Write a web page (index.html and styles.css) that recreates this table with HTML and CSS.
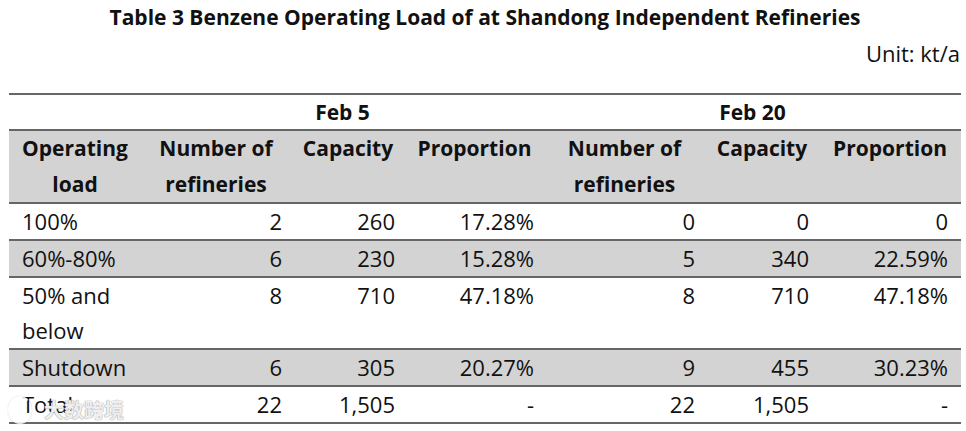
FILE: index.html
```html
<!DOCTYPE html>
<html>
<head>
<meta charset="utf-8">
<link rel="stylesheet" href="styles.css">
</head>
<body>
<div class="page">
  <h1 class="title">Table 3 Benzene Operating Load of at Shandong Independent Refineries</h1>
  <div class="unit">Unit: kt/a</div>
  <table class="load">
    <colgroup>
      <col class="c1"><col class="c2"><col class="c3"><col class="c4"><col class="c5"><col class="c6"><col class="c7">
    </colgroup>
    <tr class="dates">
      <th></th>
      <th colspan="3">Feb 5</th>
      <th colspan="3">Feb 20</th>
    </tr>
    <tr class="head grey">
      <th>Operating<br>load</th>
      <th>Number of<br>refineries</th>
      <th>Capacity</th>
      <th>Proportion</th>
      <th>Number of<br>refineries</th>
      <th>Capacity</th>
      <th>Proportion</th>
    </tr>
    <tr>
      <td>100%</td><td>2</td><td>260</td><td>17.28%</td><td>0</td><td>0</td><td>0</td>
    </tr>
    <tr class="grey">
      <td>60%-80%</td><td>6</td><td>230</td><td>15.28%</td><td>5</td><td>340</td><td>22.59%</td>
    </tr>
    <tr class="tall">
      <td>50% and<br>below</td><td>8</td><td>710</td><td>47.18%</td><td>8</td><td>710</td><td>47.18%</td>
    </tr>
    <tr class="grey">
      <td>Shutdown</td><td>6</td><td>305</td><td>20.27%</td><td>9</td><td>455</td><td>30.23%</td>
    </tr>
    <tr>
      <td>Total</td><td>22</td><td>1,505</td><td>-</td><td>22</td><td>1,505</td><td>-</td>
    </tr>
  </table>
  <div class="watermark"><span class="wm-logo"></span><span class="wm-text">大数跨境</span></div>
</div>
</body>
</html>
```
FILE: styles.css
```css
html, body {
  margin: 0;
  padding: 0;
  background: #ffffff;
}
body {
  font-family: "Open Sans", "Noto Sans CJK SC", sans-serif;
  color: #111111;
  width: 966px;
  height: 431px;
  overflow: hidden;
}
.page {
  position: relative;
  width: 966px;
  height: 431px;
}
.title {
  margin: 0;
  padding-top: 3px;
  font-size: 21px;
  font-weight: 700;
  line-height: 28px;
  text-align: center;
  padding-left: 4px;
}
.unit {
  font-size: 22px;
  line-height: 28px;
  text-align: right;
  padding-right: 6px;
  margin-top: 8px;
}
.load {
  margin-top: 26px;
  margin-left: 9px;
  border-collapse: collapse;
  table-layout: fixed;
  width: 952px;
  font-size: 22px;
}
.c1 { width: 132px; }
.c2 { width: 150px; }
.c3 { width: 114px; }
.c4 { width: 139px; }
.c5 { width: 161px; }
.c6 { width: 114px; }
.c7 { width: 142px; }
.load tr {
  border-top: 2px solid #666666;
  border-bottom: 2px solid #666666;
}
.load th, .load td {
  padding: 0;
  line-height: 35px;
  white-space: nowrap;
}
.load th {
  font-size: 21px;
  font-weight: 700;
  text-align: center;
  padding: 0 10px;
}
.dates th {
  line-height: 34px;
}
.head th {
  vertical-align: top;
  line-height: 35.5px;
}
.load td {
  text-align: right;
  padding-right: 10px;
  vertical-align: top;
}
.load td:first-child {
  text-align: left;
  padding-left: 13px;
  padding-right: 0;
}
.load td:nth-child(2) { padding-right: 9px; }
.load td:nth-child(4) { padding-right: 10px; }
.load td:last-child { padding-right: 13px; }
.grey {
  background: #d3d3d3;
}
.watermark {
  position: absolute;
  left: 8px;
  top: 396px;
  display: flex;
  align-items: center;
  gap: 12px;
}
.wm-logo {
  width: 16px;
  height: 20px;
  border: 4px solid rgba(255,255,255,0.85);
  border-right-color: transparent;
  border-radius: 50%;
  box-shadow: 0 0 1px rgba(120,120,120,0.6);
}
.wm-text {
  font-family: "Noto Sans CJK SC", sans-serif;
  font-size: 20px;
  line-height: 24px;
  font-weight: 700;
  color: rgba(255,255,255,0.85);
  text-shadow: 0 0 1px #9a9a9a, 0 0 1px #9a9a9a;
}
```
